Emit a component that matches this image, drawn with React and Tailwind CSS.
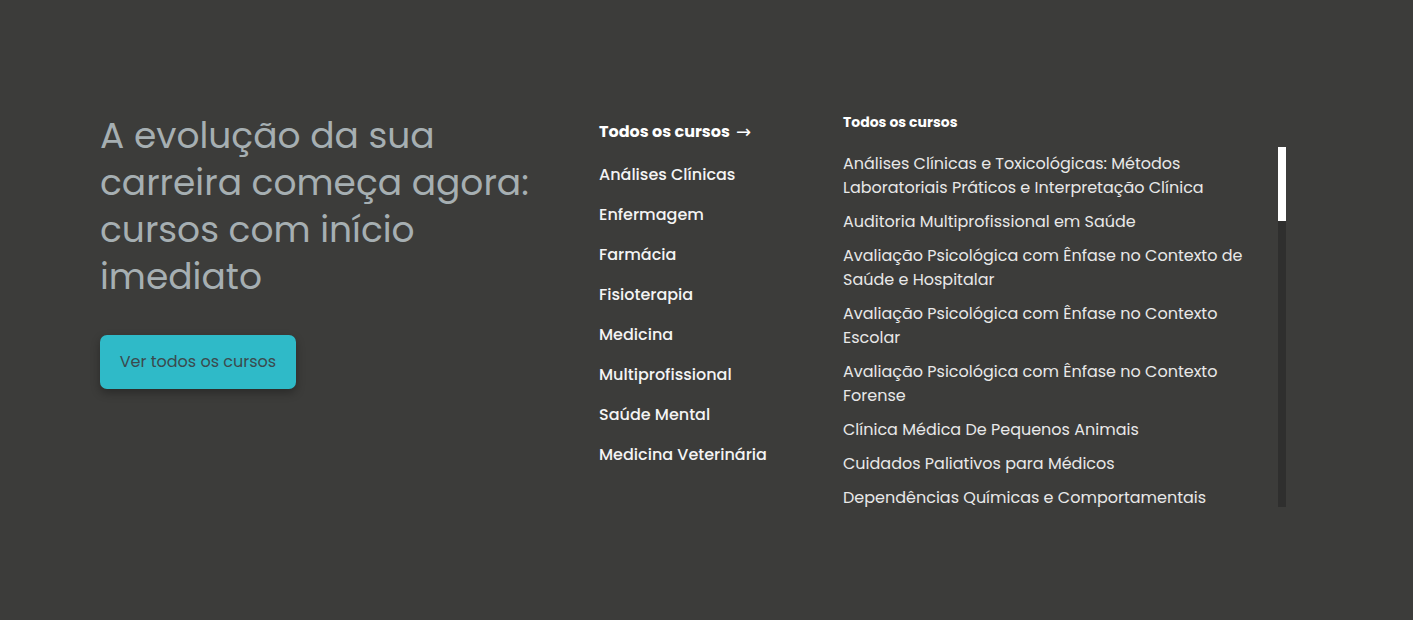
const areas = [
  "Análises Clínicas",
  "Enfermagem",
  "Farmácia",
  "Fisioterapia",
  "Medicina",
  "Multiprofissional",
  "Saúde Mental",
  "Medicina Veterinária",
];

const courses = [
  "Análises Clínicas e Toxicológicas: Métodos Laboratoriais Práticos e Interpretação Clínica",
  "Auditoria Multiprofissional em Saúde",
  "Avaliação Psicológica com Ênfase no Contexto de Saúde e Hospitalar",
  "Avaliação Psicológica com Ênfase no Contexto Escolar",
  "Avaliação Psicológica com Ênfase no Contexto Forense",
  "Clínica Médica De Pequenos Animais",
  "Cuidados Paliativos para Médicos",
  "Dependências Químicas e Comportamentais",
];

export default function App() {
  return (
    <div
      className="min-h-[620px] w-full bg-[#3c3c3a] pl-[100px] pt-[112px]"
      style={{ fontFamily: "Poppins, Inter, 'Noto Sans', sans-serif" }}
    >
      <div className="flex items-start">
        {/* Left: headline */}
        <div className="w-[499px] shrink-0">
          <h1 className="w-[440px] text-[36px] font-normal leading-[47px] text-[#a6afb2]">
            A evolução da sua carreira começa agora: cursos com início imediato
          </h1>
          <button className="mt-[35px] h-[54px] w-[196px] rounded-[7px] bg-[#2fbac8] text-[16px] text-[#3b4a4e] shadow-[0_4px_10px_rgba(0,0,0,0.3)]">
            Ver todos os cursos
          </button>
        </div>

        {/* Middle: areas */}
        <div className="w-[244px] shrink-0 pt-[9px]">
          <a href="#" className="flex items-center gap-[6px] text-[16px] font-bold leading-[22px] text-white">
            Todos os cursos
            <span className="text-[18px] font-normal" style={{ fontFamily: "'DejaVu Sans', sans-serif" }}>
              →
            </span>
          </a>
          <ul className="mt-[20px] flex flex-col gap-4">
            {areas.map((a) => (
              <li key={a}>
                <a href="#" className="block text-[16px] font-medium leading-[24px] text-[#f4f4f4]">
                  {a}
                </a>
              </li>
            ))}
          </ul>
        </div>

        {/* Right: course list with scrollbar */}
        <div className="w-[443px] shrink-0">
          <h3 className="text-[14px] font-bold leading-[20px] text-white">Todos os cursos</h3>
          <div className="mt-[15px] flex h-[360px]">
            <ul className="flex w-[435px] flex-col gap-[10px] overflow-hidden pr-[15px] pt-[5px]">
              {courses.map((c) => (
                <li key={c} className="shrink-0">
                  <a href="#" className="block text-[16px] leading-[24px] text-[#e8e8e8]">
                    {c}
                  </a>
                </li>
              ))}
            </ul>
            <div className="h-full w-2 bg-[#2f2f2e]">
              <div className="h-[74px] w-full bg-white" />
            </div>
          </div>
        </div>
      </div>
    </div>
  );
}
